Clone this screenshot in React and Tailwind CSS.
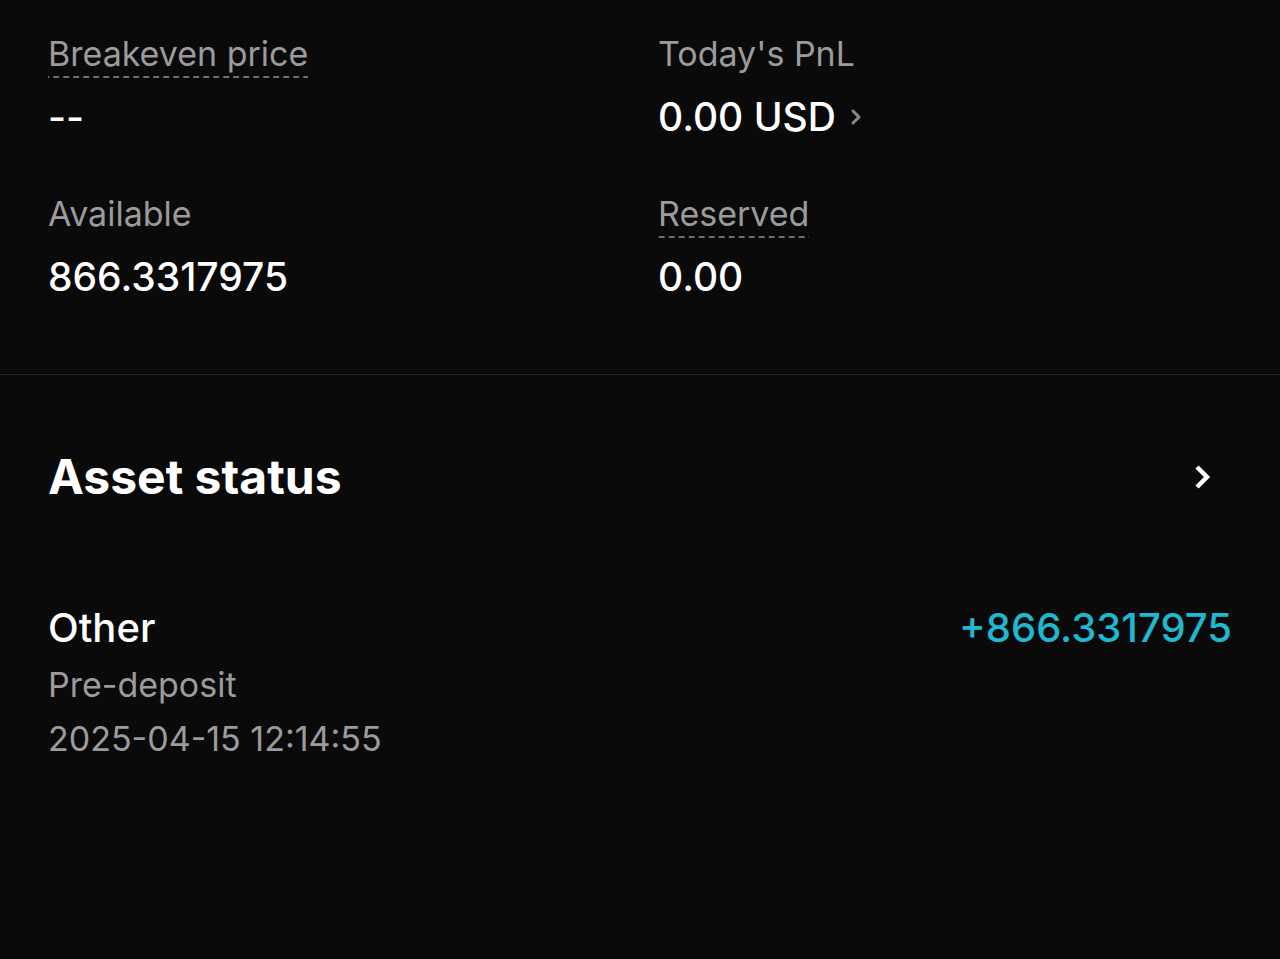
import React from 'react'

const Dashed = ({ children }) => (
  <span className="inline-block bg-[linear-gradient(to_right,#707070_60%,transparent_0)] bg-[length:10px_2px] bg-bottom bg-repeat-x">
    {children}
  </span>
)

const Stat = ({ label, value, dashed, chevron }) => (
  <div className="flex flex-col">
    <div className="h-[48px] text-[34px] leading-[48px] text-[#9b9b9b]">
      {dashed ? <Dashed>{label}</Dashed> : label}
    </div>
    <div className="mt-[15px] flex items-center text-[39px] font-medium leading-[48px] text-white">
      <span>{value}</span>
      {chevron && (
        <svg className="ml-[14px] h-[18px] w-[12px]" viewBox="0 0 12 18" fill="none">
          <path d="M3 3l6 6-6 6" stroke="#8a8a8a" strokeWidth="3" strokeLinecap="round" strokeLinejoin="round" />
        </svg>
      )}
    </div>
  </div>
)

export default function App() {
  return (
    <div className="min-h-[959px] bg-[#0a0a0a] font-['Inter',sans-serif]">
      <div className="grid grid-cols-2 gap-x-[36px] gap-y-[49px] px-[48px] pt-[30px] pb-[73px]">
        <Stat label="Breakeven price" value="--" dashed />
        <Stat label="Today's PnL" value="0.00 USD" chevron />
        <Stat label="Available" value="866.3317975" />
        <Stat label="Reserved" value="0.00" dashed />
      </div>
      <div className="h-px bg-[#242424]" />
      <div className="flex items-center justify-between px-[48px] pt-[74px]">
        <h2 className="text-[48px] font-bold leading-[56px] text-white">Asset status</h2>
        <svg className="mr-[18px] h-[28px] w-[22px]" viewBox="0 0 22 28" fill="none">
          <path d="M5 4l10 10-10 10" stroke="#fff" strokeWidth="4.5" strokeLinejoin="miter" />
        </svg>
      </div>
      <div className="mt-[99px] flex items-start justify-between px-[48px]">
        <div className="flex flex-col">
          <div className="text-[40px] font-medium leading-[48px] text-white">Other</div>
          <div className="mt-[9px] text-[34px] leading-[48px] text-[#9b9b9b]">Pre-deposit</div>
          <div className="mt-[6px] text-[34px] leading-[48px] text-[#9b9b9b]">2025-04-15 12:14:55</div>
        </div>
        <div className="text-[40px] font-medium leading-[48px] text-[#1fb8d0]">+866.3317975</div>
      </div>
    </div>
  )
}
